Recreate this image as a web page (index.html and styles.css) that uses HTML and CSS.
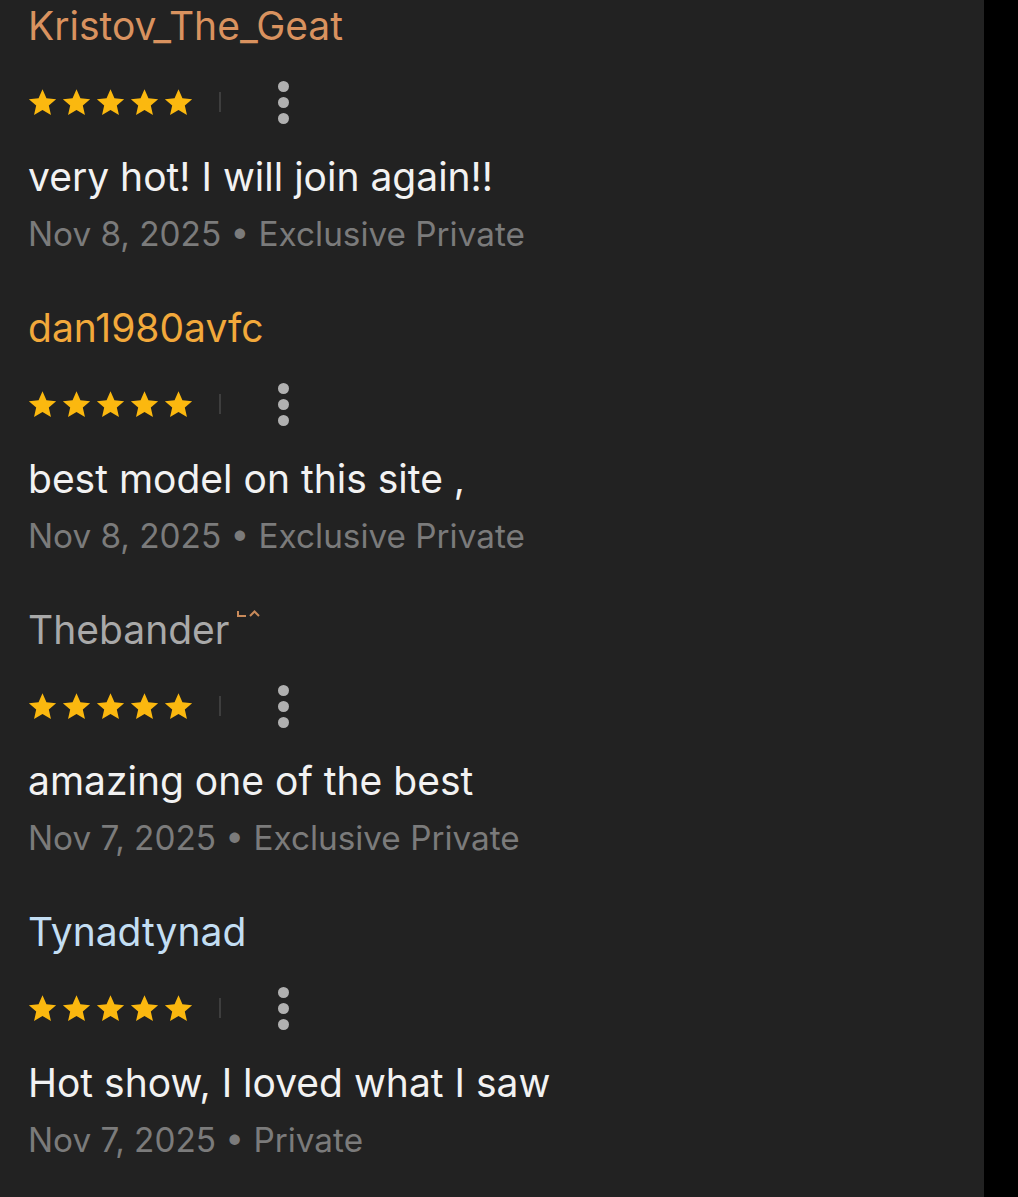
FILE: index.html
```html
<!DOCTYPE html>
<html lang="en">
<head>
<meta charset="utf-8">
<title>Reviews</title>
<link rel="stylesheet" href="styles.css">
</head>
<body>
<svg width="0" height="0" class="defs" aria-hidden="true">
  <defs>
    <symbol id="star" viewBox="0 0 24 24">
      <path d="M12 1.8l3.05 6.9 7.5.7-5.66 4.98 1.66 7.36L12 17.9l-6.55 3.84 1.66-7.36L1.45 9.4l7.5-.7z" fill="#fbb80f"/>
    </symbol>
  </defs>
</svg>
<main class="panel">
  <article class="review">
    <div class="name name-peach">Kristov_The_Geat</div>
    <div class="rating-row">
      <div class="stars">
        <svg class="star"><use href="#star"/></svg><svg class="star"><use href="#star"/></svg><svg class="star"><use href="#star"/></svg><svg class="star"><use href="#star"/></svg><svg class="star"><use href="#star"/></svg>
      </div>
      <span class="divider"></span>
      <button class="kebab" aria-label="More"><span></span><span></span><span></span></button>
    </div>
    <p class="text">very hot! I will join again!!</p>
    <p class="meta">Nov 8, 2025 • Exclusive Private</p>
  </article>
  <article class="review">
    <div class="name name-orange">dan1980avfc</div>
    <div class="rating-row">
      <div class="stars">
        <svg class="star"><use href="#star"/></svg><svg class="star"><use href="#star"/></svg><svg class="star"><use href="#star"/></svg><svg class="star"><use href="#star"/></svg><svg class="star"><use href="#star"/></svg>
      </div>
      <span class="divider"></span>
      <button class="kebab" aria-label="More"><span></span><span></span><span></span></button>
    </div>
    <p class="text">best model on this site ,</p>
    <p class="meta">Nov 8, 2025 • Exclusive Private</p>
  </article>
  <article class="review">
    <div class="name name-gray">Thebander<svg class="badge" viewBox="0 0 24 8" aria-hidden="true"><path d="M1 1v5h8M13 6l4.5-4.5L22 6" fill="none" stroke="#c98a5a" stroke-width="2"/></svg></div>
    <div class="rating-row">
      <div class="stars">
        <svg class="star"><use href="#star"/></svg><svg class="star"><use href="#star"/></svg><svg class="star"><use href="#star"/></svg><svg class="star"><use href="#star"/></svg><svg class="star"><use href="#star"/></svg>
      </div>
      <span class="divider"></span>
      <button class="kebab" aria-label="More"><span></span><span></span><span></span></button>
    </div>
    <p class="text">amazing one of the best</p>
    <p class="meta">Nov 7, 2025 • Exclusive Private</p>
  </article>
  <article class="review">
    <div class="name name-blue">Tynadtynad</div>
    <div class="rating-row">
      <div class="stars">
        <svg class="star"><use href="#star"/></svg><svg class="star"><use href="#star"/></svg><svg class="star"><use href="#star"/></svg><svg class="star"><use href="#star"/></svg><svg class="star"><use href="#star"/></svg>
      </div>
      <span class="divider"></span>
      <button class="kebab" aria-label="More"><span></span><span></span><span></span></button>
    </div>
    <p class="text">Hot show, I loved what I saw</p>
    <p class="meta">Nov 7, 2025 • Private</p>
  </article>
</main>
</body>
</html>
```
FILE: styles.css
```css
html, body {
  margin: 0;
  padding: 0;
  background: #000;
}
.defs {
  position: absolute;
  width: 0;
  height: 0;
}
.panel {
  width: 984px;
  min-height: 1197px;
  background: #222222;
  box-sizing: border-box;
  padding: 0 0 0 28px;
  font-family: Inter, "Noto Sans", sans-serif;
  display: flex;
  flex-direction: column;
  gap: 45px;
}
.review {
  display: flex;
  flex-direction: column;
}
.name {
  font-size: 39px;
  line-height: 52px;
  height: 52px;
  position: relative;
  display: flex;
  align-items: center;
}
.name-peach { color: #d9925f; }
.name-orange { color: #f2a93b; }
.name-gray { color: #a9a9a9; }
.name-blue { color: #c3def3; }
.badge {
  width: 24px;
  height: 8px;
  align-self: flex-start;
  margin: 6px 0 0 8px;
}
.rating-row {
  margin-top: 30px;
  height: 40px;
  display: flex;
  align-items: center;
}
.stars {
  display: flex;
  gap: 3px;
  margin-left: -1px;
}
.star {
  width: 31px;
  height: 31px;
  display: block;
}
.divider {
  width: 2px;
  height: 20px;
  background: #3e3e3e;
  margin-left: 25px;
}
.kebab {
  margin-left: 57px;
  background: none;
  border: 0;
  padding: 0;
  display: flex;
  flex-direction: column;
  gap: 5px;
}
.kebab span {
  width: 11px;
  height: 11px;
  border-radius: 50%;
  background: #b0b0b0;
  display: block;
}
.text {
  margin: 30px 0 0;
  font-size: 39px;
  line-height: 50px;
  color: #f2f2f2;
}
.meta {
  margin: 9px 0 0;
  font-size: 33.3px;
  line-height: 46px;
  color: #7b7b7b;
}
```
